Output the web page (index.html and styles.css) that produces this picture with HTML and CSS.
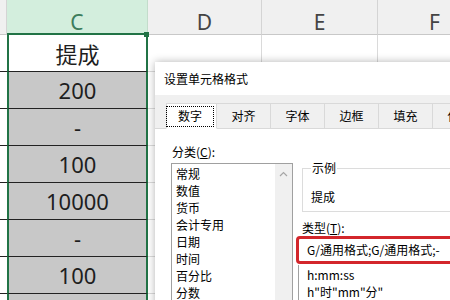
FILE: index.html
```html
<html>
<head>
    <meta charset="utf-8">
    <title>设置单元格格式</title>
    <link rel="stylesheet" href="styles.css">
</head>
<body>
    <div class="sheet">
        <div class="hd col-b"></div>
        <div class="hd col-c">C<span class="handle"></span></div>
        <div class="hd">D</div>
        <div class="hd">E</div>
        <div class="hd">F</div>

        <div class="cell col-b"></div>
        <div class="cell sel first">提成</div>
        <div class="cell plain"></div>
        <div class="cell plain"></div>
        <div class="cell plain"></div>

        <div class="cell col-b"></div>
        <div class="cell sel">200</div>
        <div class="cell plain"></div>
        <div class="cell plain"></div>
        <div class="cell plain"></div>

        <div class="cell col-b"></div>
        <div class="cell sel">-</div>
        <div class="cell plain"></div>
        <div class="cell plain"></div>
        <div class="cell plain"></div>

        <div class="cell col-b"></div>
        <div class="cell sel">100</div>
        <div class="cell plain"></div>
        <div class="cell plain"></div>
        <div class="cell plain"></div>

        <div class="cell col-b"></div>
        <div class="cell sel">10000</div>
        <div class="cell plain"></div>
        <div class="cell plain"></div>
        <div class="cell plain"></div>

        <div class="cell col-b"></div>
        <div class="cell sel">-</div>
        <div class="cell plain"></div>
        <div class="cell plain"></div>
        <div class="cell plain"></div>

        <div class="cell col-b"></div>
        <div class="cell sel">100</div>
        <div class="cell plain"></div>
        <div class="cell plain"></div>
        <div class="cell plain"></div>

        <div class="cell col-b"></div>
        <div class="cell sel"></div>
        <div class="cell plain"></div>
        <div class="cell plain"></div>
        <div class="cell plain"></div>
    </div>

    <div class="dialog">
        <div class="dlg-title">设置单元格格式</div>
        <div class="dlg-tabs">
            <div class="tab active"><span>数字</span></div>
            <div class="tab">对齐</div>
            <div class="tab">字体</div>
            <div class="tab">边框</div>
            <div class="tab">填充</div>
            <div class="tab">保护</div>
        </div>
        <div class="dlg-page">
            <div class="left-col">
                <div class="label">分类(<u>C</u>):</div>
                <div class="listbox">
                    <ul class="items">
                        <li>常规</li>
                        <li>数值</li>
                        <li>货币</li>
                        <li>会计专用</li>
                        <li>日期</li>
                        <li>时间</li>
                        <li>百分比</li>
                        <li>分数</li>
                    </ul>
                    <div class="scrollbar">
                        <svg width="9" height="6" viewBox="0 0 9 6"><polyline points="1,5 4.5,1.5 8,5" fill="none" stroke="#a6a6a6" stroke-width="1.2"/></svg>
                    </div>
                </div>
            </div>
            <div class="right-col">
                <fieldset class="sample">
                    <legend>示例</legend>
                    <div class="sample-text">提成</div>
                </fieldset>
                <div class="label type-label">类型(<u>T</u>):</div>
                <div class="mark">
                    <div class="type-input">G/通用格式;G/通用格式;-</div>
                </div>
                <ul class="type-list">
                    <li>h:mm:ss</li>
                    <li>h"时"mm"分"</li>
                </ul>
            </div>
        </div>
    </div>
</body>
</html>
```

FILE: styles.css
```css
body {
    margin: 0;
    width: 450px;
    height: 300px;
    overflow: hidden;
    position: relative;
    background: #fff;
    font-family: "Noto Sans", "Noto Sans CJK SC", sans-serif;
}
.sheet {
    display: grid;
    grid-template-columns: 7px 141px 114px 116px 114px;
    grid-template-rows: 35px;
    grid-auto-rows: 37px;
}
.hd {
    box-sizing: border-box;
    background: #f0f0f0;
    border-right: 1px solid #d4d4d4;
    border-bottom: 1px solid #c8c8c8;
    display: flex;
    align-items: flex-end;
    justify-content: center;
    padding-bottom: 1px;
    font-size: 21px;
    line-height: 21px;
    color: #444;
}
.hd.col-b {
    border-right: 1px solid #d4d4d4;
}
.hd.col-c {
    position: relative;
    background: #d3eedd;
    color: #3d7d5c;
    border-right: 1px solid #c3dccb;
    border-bottom: 2px solid #217346;
    padding-bottom: 0;
}
.handle {
    position: absolute;
    right: -2px;
    bottom: -4px;
    width: 5px;
    height: 5px;
    background: #217346;
}
.cell {
    box-sizing: border-box;
    display: flex;
    align-items: center;
    justify-content: center;
    font-size: 22px;
    color: #1e1e1e;
}
.cell.col-b {
    border-bottom: 1px solid #222;
}
.cell.sel {
    background: #c8c8c8;
    border-left: 2px solid #217346;
    border-right: 2px solid #217346;
    border-bottom: 1px solid #222;
}
.cell.sel.first {
    background: #fff;
}
.cell.plain {
    border-right: 1px solid #dadada;
    border-bottom: 1px solid #dadada;
}
.dialog {
    position: absolute;
    left: 155px;
    top: 62px;
    width: 310px;
    height: 260px;
    overflow: hidden;
    background: #fff;
    box-shadow: 0 0 8px rgba(0, 0, 0, 0.3);
    font-family: "Noto Sans CJK SC", sans-serif;
    font-size: 12px;
    color: #000;
}
.dlg-title {
    height: 33px;
    line-height: 33px;
    padding-left: 9px;
}
.dlg-tabs {
    box-sizing: border-box;
    height: 34px;
    background: #f0f0f0;
    border-bottom: 1px solid #d9d9d9;
    display: flex;
    align-items: flex-end;
    padding-left: 11px;
}
.tab {
    box-sizing: border-box;
    flex: none;
    width: 54px;
    height: 26px;
    margin-bottom: -1px;
    border: 1px solid #d9d9d9;
    border-left: none;
    background: #f0f0f0;
    text-align: center;
    line-height: 24px;
}
.tab.active {
    width: 51px;
    border-left: 1px solid #d9d9d9;
    background: #fff;
    border-bottom-color: #fff;
    padding-top: 3px;
    line-height: 18px;
}
.tab.active span {
    display: block;
    margin: 0 3px 0 0;
    outline: 1px dotted #000;
    height: 19px;
}
.dlg-page {
    display: grid;
    grid-template-columns: 122px 1fr;
    column-gap: 9px;
    padding: 14px 0 0 16px;
}
.label {
    line-height: 17px;
    padding-left: 1px;
}
.listbox {
    box-sizing: border-box;
    margin-top: 3px;
    height: 160px;
    border: 1px solid #a0a0a0;
    display: flex;
}
.items {
    list-style: none;
    margin: 0;
    padding: 1px 0 0 4px;
    flex: 1;
    line-height: 17px;
}
.scrollbar {
    width: 17px;
    background: #f0f0f0;
    display: flex;
    justify-content: center;
    padding-top: 7px;
    align-items: flex-start;
}
.sample {
    margin: 18px 0 0;
    padding: 0 0 6px 8px;
    width: 200px;
    border: 1px solid #dcdcdc;
}
.sample legend {
    padding: 0 1px;
    line-height: 14px;
}
.sample-text {
    margin-top: 13px;
    line-height: 17px;
}
.type-label {
    margin-top: 7px;
    padding-left: 0;
}
.mark {
    margin-left: -6px;
    width: 240px;
    height: 28px;
    box-sizing: border-box;
    border: 3px solid #d3262b;
    border-radius: 4px;
}
.type-input {
    line-height: 22px;
    padding-left: 8px;
}
.type-list {
    list-style: none;
    margin: 1px 0 0 -4px;
    padding: 1px 0 0 8px;
    border-left: 1px solid #a0a0a0;
    line-height: 17px;
}
```
